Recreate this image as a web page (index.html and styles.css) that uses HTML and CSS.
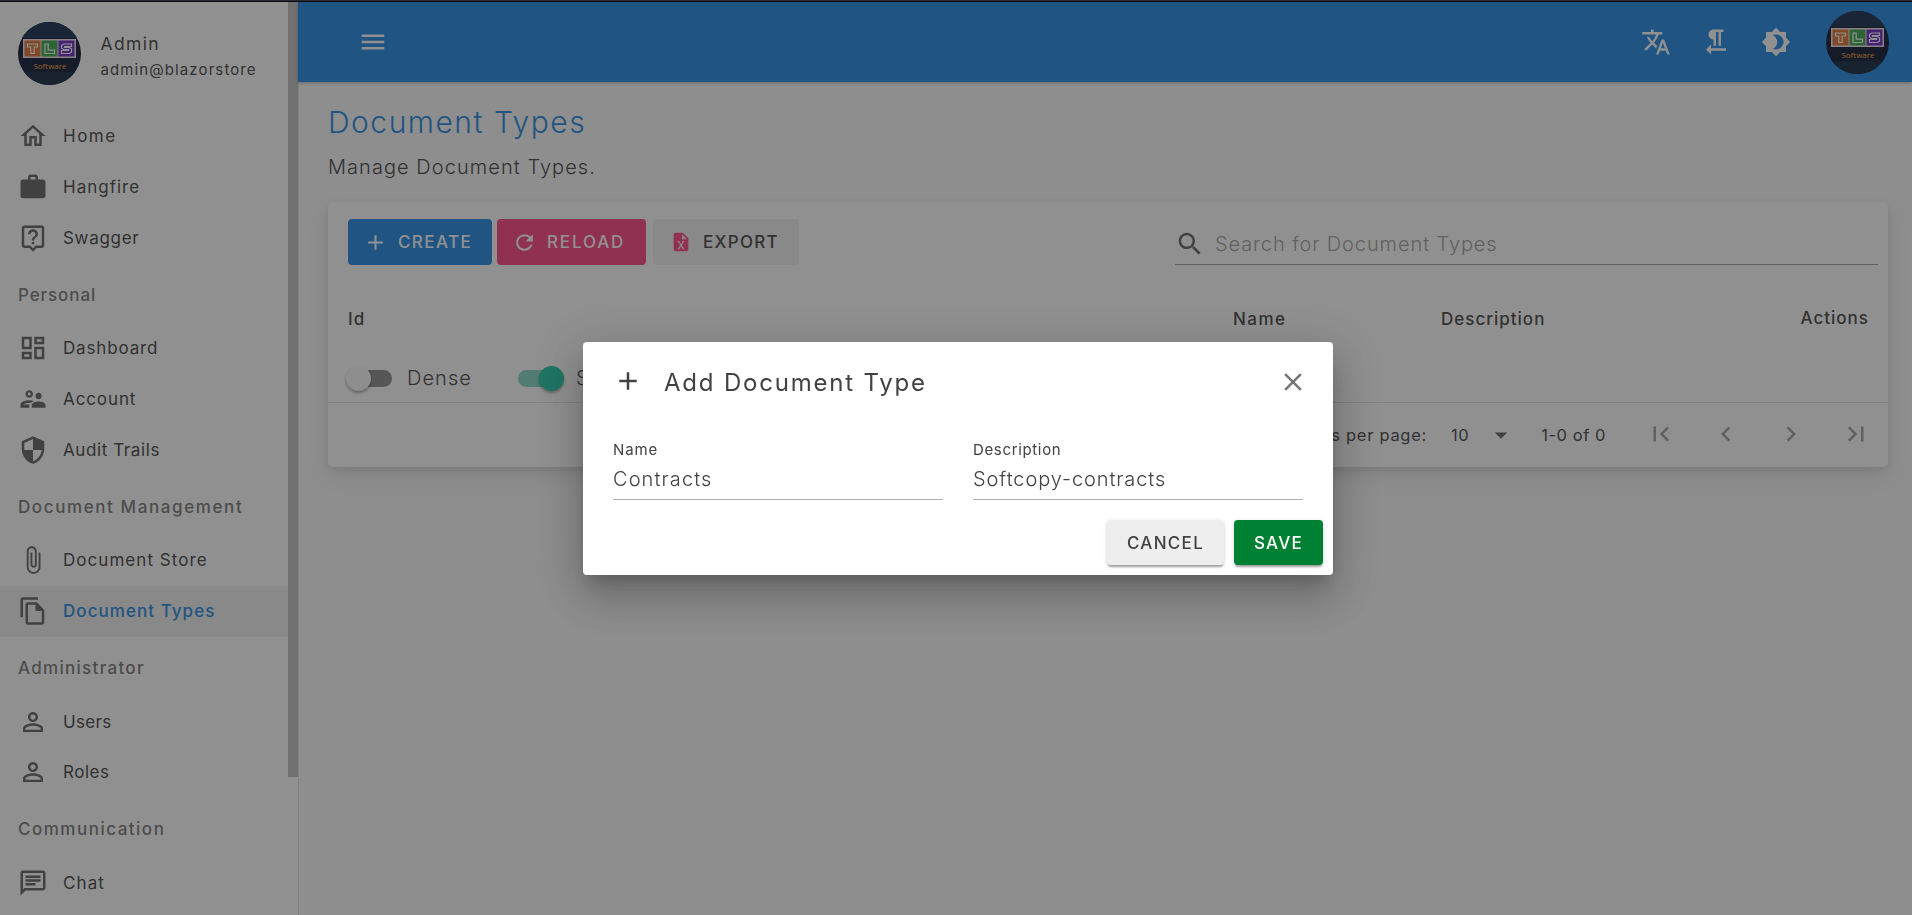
FILE: index.html
```html
<!DOCTYPE html>
<html lang="en">
<head>
<meta charset="utf-8">
<title>Document Types</title>
<link rel="stylesheet" href="styles.css">
</head>
<body>
<svg width="0" height="0" class="defs" aria-hidden="true">
  <symbol id="logo" viewBox="0 0 63 63">
    <circle cx="31.5" cy="31.5" r="31.5" fill="#0b1530"/>
    <path d="M4 16 A31.5 31.5 0 0 1 59 16Z" fill="#132a4c"/>
    <path d="M6 50 A31.5 31.5 0 0 0 57 50Z" fill="#10253f"/>
    <rect x="5" y="17" width="53" height="19" fill="#f3e3e6"/>
    <rect x="6.500" y="18.500" width="16" height="16" fill="#e0702c"/>
    <rect x="23.500" y="18.500" width="16" height="16" fill="#38a648"/>
    <rect x="40.500" y="18.500" width="16" height="16" fill="#6a22c8"/>
    <g fill="none" stroke="#fff" stroke-width="1.2">
      <path d="M9.500 22h10v3h-3.300v6.500h-3.400V25H9.500z"/>
      <path d="M27 22h3.200v6.200h6.300v3.300H27z"/>
      <path d="M53.500 22h-8l-2 1.500v2.500l2 1.500h5v1h-7v3h8l2-1.500v-3l-2-1.500h-5v-1h7z"/>
    </g>
  </symbol>
  <symbol id="person" viewBox="0 0 24 24"><path d="M12 5.900c1.160 0 2.100.94 2.100 2.100s-.94 2.100-2.100 2.100S9.900 9.160 9.900 8s.94-2.100 2.100-2.100m0 9c2.970 0 6.100 1.460 6.100 2.100v1.100H5.900V17c0-.64 3.130-2.100 6.100-2.100M12 4C9.790 4 8 5.790 8 8s1.790 4 4 4 4-1.790 4-4-1.790-4-4-4zm0 9c-2.670 0-8 1.340-8 4v3h16v-3c0-2.660-5.330-4-8-4z"/></symbol>
  <symbol id="plus" viewBox="0 0 24 24"><path d="M19 13h-6v6h-2v-6H5v-2h6V5h2v6h6v2z"/></symbol>
</svg>

<div class="app">
  <div class="window-edge"></div>
  <div class="shell">
    <aside class="drawer">
      <div class="profile">
        <svg class="avatar"><use href="#logo" width="63" height="63"/><text x="32" y="47" text-anchor="middle" class="logo-text">Software</text></svg>
        <div class="who"><span class="who-name">Admin</span><span class="who-mail">admin@blazorstore</span></div>
      </div>
      <nav class="nav">
        <a class="item"><svg viewBox="0 0 24 24"><path d="M12 5.690l5 4.500V18h-2v-6H9v6H7v-7.810l5-4.500M12 3L2 12h3v8h6v-6h2v6h6v-8h3L12 3z"/></svg><span class="t-home">Home</span></a>
        <a class="item"><svg viewBox="0 0 24 24"><path d="M10 2h4c1.100 0 2 .9 2 2v2h4c1.100 0 2 .9 2 2v11c0 1.100-.9 2-2 2H4c-1.100 0-2-.9-2-2V8c0-1.100.9-2 2-2h4V4c0-1.100.9-2 2-2zm4 4V4h-4v2h4z"/></svg><span class="t-hangfire">Hangfire</span></a>
        <a class="item"><svg viewBox="0 0 24 24"><path d="M19 2H5c-1.110 0-2 .9-2 2v14c0 1.100.89 2 2 2h4l3 3 3-3h4c1.100 0 2-.9 2-2V4c0-1.100-.9-2-2-2zm0 16h-4.830l-.59.590L12 20.170l-1.590-1.590-.58-.58H5V4h14v14zm-8-3h2v2h-2zm1-8c1.100 0 2 .9 2 2 0 2-3 1.750-3 5h2c0-2.250 3-2.500 3-5 0-2.210-1.790-4-4-4S8 6.790 8 9h2c0-1.100.9-2 2-2z"/></svg><span class="t-swagger">Swagger</span></a>
        <div class="group"><span class="t-personal">Personal</span></div>
        <a class="item"><svg viewBox="0 0 24 24"><path d="M19 5v2h-4V5h4M9 5v6H5V5h4m10 8v6h-4v-6h4M9 17v2H5v-2h4M21 3h-8v6h8V3zM11 3H3v10h8V3zm10 8h-8v10h8V11zm-10 4H3v6h8v-6z"/></svg><span class="t-dashboard">Dashboard</span></a>
        <a class="item"><svg viewBox="0 0 24 24"><path d="M16.500 12c1.380 0 2.490-1.120 2.490-2.500S17.880 7 16.500 7 14 8.120 14 9.500s1.120 2.500 2.500 2.500zM9 11c1.660 0 2.990-1.340 2.990-3S10.660 5 9 5 6 6.340 6 8s1.340 3 3 3zm0-4.200c.66 0 1.200.54 1.200 1.200S9.660 9.200 9 9.200 7.800 8.660 7.800 8 8.340 6.800 9 6.800zM16.500 14c-1.830 0-5.500.92-5.500 2.750V19h11v-2.250c0-1.830-3.670-2.750-5.500-2.750zM9 13c-2.330 0-7 1.170-7 3.500V19h7v-2.250c0-.14.010-.27.040-.4H4.600c.6-.6 2.600-1.350 4.400-1.350.5 0 1 .06 1.480.140.6-.68 1.400-1.200 2.270-1.560C11.360 13.200 9.970 13 9 13z"/></svg><span class="t-account">Account</span></a>
        <a class="item"><svg viewBox="0 0 24 24"><path d="M12 1L3 5v6c0 5.550 3.840 10.740 9 12 5.160-1.260 9-6.450 9-12V5l-9-4zm0 10.990h7c-.53 4.120-3.280 7.790-7 8.940V12H5V6.300l7-3.110v8.800z"/></svg><span class="t-audit">Audit Trails</span></a>
        <div class="group"><span class="t-docmgmt">Document Management</span></div>
        <a class="item"><svg viewBox="0 0 24 24"><path d="M16.500 6v11.500c0 2.210-1.790 4-4 4s-4-1.790-4-4V5c0-1.380 1.120-2.500 2.500-2.500s2.500 1.120 2.500 2.500v10.500c0 .55-.45 1-1 1s-1-.45-1-1V6H10v9.500c0 1.380 1.120 2.500 2.500 2.500s2.500-1.120 2.500-2.500V5c0-2.210-1.790-4-4-4S7 2.790 7 5v12.500c0 3.040 2.460 5.500 5.500 5.500s5.500-2.460 5.500-5.500V6h-1.500z"/></svg><span class="t-store">Document Store</span></a>
        <a class="item active"><svg viewBox="0 0 24 24"><path d="M16 1H4c-1.100 0-2 .9-2 2v14h2V3h12V1zm-1 4H8c-1.100 0-1.990.9-1.990 2L6 21c0 1.100.89 2 1.990 2H19c1.100 0 2-.9 2-2V11l-6-6zM8 21V7h6v5h5v9H8z"/></svg><span class="t-types">Document Types</span></a>
        <div class="group"><span class="t-administrator">Administrator</span></div>
        <a class="item"><svg><use href="#person"/></svg><span class="t-users">Users</span></a>
        <a class="item"><svg><use href="#person"/></svg><span class="t-roles">Roles</span></a>
        <div class="group"><span class="t-communication">Communication</span></div>
        <a class="item"><svg viewBox="0 0 24 24"><path d="M4 4h16v12H5.170L4 17.170V4m0-2c-1.100 0-1.990.9-1.990 2L2 22l4-4h14c1.100 0 2-.9 2-2V4c0-1.100-.9-2-2-2H4zm2 10h8v2H6v-2zm0-3h12v2H6V9zm0-3h12v2H6V6z"/></svg><span class="t-chat">Chat</span></a>
      </nav>
      <div class="scroll-thumb"></div>
    </aside>

    <div class="body">
      <header class="appbar">
        <svg class="ic menu" viewBox="0 0 24 24"><path d="M3 18h18v-2H3v2zm0-5h18v-2H3v2zm0-7v2h18V6H3z"/></svg>
        <div class="appbar-end">
          <svg class="ic" viewBox="0 0 24 24"><path d="M12.870 15.070l-2.540-2.510.03-.03c1.740-1.940 2.980-4.170 3.710-6.530H17V4h-7V2H8v2H1v1.990h11.170C11.500 7.920 10.440 9.750 9 11.350 8.070 10.320 7.300 9.190 6.690 8h-2c.73 1.630 1.730 3.170 2.980 4.560l-5.090 5.020L4 19l5-5 3.110 3.110.76-2.040zM18.500 10h-2L12 22h2l1.120-3h4.750L21 22h2l-4.500-12zm-2.620 7l1.620-4.330L19.120 17h-3.240z"/></svg>
          <svg class="ic" viewBox="0 0 24 24"><path d="M10 10v5h2V4h2v11h2V4h2V2h-8C7.790 2 6 3.790 6 6s1.790 4 4 4zm-2 7v-3l-4 4 4 4v-3h12v-2H8z"/></svg>
          <svg class="ic" viewBox="0 0 24 24"><path d="M20 8.690V4h-4.690L12 .69 8.690 4H4v4.690L.69 12 4 15.310V20h4.690L12 23.310 15.310 20H20v-4.690L23.310 12 20 8.690zM12 18c-.89 0-1.740-.2-2.500-.55C11.560 16.500 13 14.420 13 12s-1.440-4.500-3.500-5.450C10.260 6.200 11.110 6 12 6c3.310 0 6 2.690 6 6s-2.690 6-6 6z"/></svg>
          <svg class="avatar bar-avatar"><use href="#logo" width="63" height="63"/><text x="32" y="47" text-anchor="middle" class="logo-text">Software</text></svg>
        </div>
      </header>

      <main class="content">
        <h1><span class="t-title">Document Types</span></h1>
        <p class="sub"><span class="t-sub">Manage Document Types.</span></p>
        <section class="card">
          <div class="toolbar">
            <div class="btn primary"><svg class="wide"><use href="#plus"/></svg><span class="t-create">CREATE</span></div>
            <div class="btn secondary"><svg class="wide" viewBox="0 0 24 24"><path d="M17.650 6.350C16.200 4.900 14.210 4 12 4c-4.420 0-7.990 3.580-7.990 8s3.570 8 7.990 8c3.730 0 6.840-2.550 7.730-6h-2.080c-.82 2.330-3.040 4-5.650 4-3.310 0-6-2.690-6-6s2.690-6 6-6c1.660 0 3.140.69 4.220 1.780L13 11h7V4l-2.350 2.350z"/></svg><span class="t-reload">RELOAD</span></div>
            <div class="btn plain"><svg class="pink" viewBox="0 0 24 24"><path d="M14 2H6c-1.100 0-2 .9-2 2v16c0 1.100.9 2 2 2h12c1.100 0 2-.9 2-2V8l-6-6zm1.800 18H14l-2-3.400-2 3.400H8.200l2.900-4.500L8.200 11H10l2 3.400 2-3.400h1.800l-2.900 4.500 2.900 4.500zM13 9V3.500L18.500 9H13z"/></svg><span class="t-export">EXPORT</span></div>
            <div class="search"><svg viewBox="0 0 24 24"><path d="M15.500 14h-.79l-.28-.27C15.410 12.590 16 11.110 16 9.500 16 5.910 13.090 3 9.500 3S3 5.910 3 9.500 5.910 16 9.500 16c1.610 0 3.090-.59 4.230-1.570l.27.280v.79l5 4.990L20.490 19l-4.990-5zm-6 0C7.010 14 5 11.990 5 9.500S7.010 5 9.500 5 14 7.010 14 9.500 11.990 14 9.500 14z"/></svg><span class="t-search">Search for Document Types</span></div>
          </div>
          <div class="thead"><span class="c-id">Id</span><span class="c-name"><span class="t-colname">Name</span></span><span class="c-desc"><span class="t-coldesc">Description</span></span><span class="c-act">Actions</span></div>
          <div class="switches">
            <span class="switch off"><i></i></span><span class="sw-label first">Dense</span>
            <span class="switch on"><i></i></span><span class="sw-label">Striped</span>
          </div>
          <div class="pager">
            <span class="rows">Rows per page:</span><span class="count">10</span>
            <svg class="caret" viewBox="0 0 24 24"><path d="M7 10l5 5 5-5z"/></svg>
            <span class="range">1-0 of 0</span>
            <div class="page-icons">
              <svg viewBox="0 0 24 24"><path d="M18.410 16.590L13.820 12l4.590-4.590L17 6l-6 6 6 6zM6 6h2v12H6z"/></svg>
              <svg viewBox="0 0 24 24"><path d="M15.410 7.410L14 6l-6 6 6 6 1.410-1.410L10.830 12z"/></svg>
              <svg viewBox="0 0 24 24"><path d="M10 6L8.590 7.410 13.170 12l-4.580 4.590L10 18l6-6z"/></svg>
              <svg viewBox="0 0 24 24"><path d="M5.590 7.410L10.180 12l-4.590 4.590L7 18l6-6-6-6zM16 6h2v12h-2z"/></svg>
            </div>
          </div>
        </section>
      </main>
    </div>
  </div>
</div>

<div class="overlay">
  <div class="dialog">
    <div class="dialog-head">
      <svg class="add"><use href="#plus"/></svg><span class="t-dialog">Add Document Type</span>
      <svg class="close" viewBox="0 0 24 24"><path d="M19 6.410L17.590 5 12 10.590 6.410 5 5 6.410 10.590 12 5 17.590 6.410 19 12 13.410 17.590 19 19 17.590 13.410 12z"/></svg>
    </div>
    <div class="fields">
      <div class="field"><label><span class="t-lname">Name</span></label><div class="value"><span class="t-contracts">Contracts</span></div></div>
      <div class="field"><label><span class="t-ldesc">Description</span></label><div class="value"><span class="t-softcopy">Softcopy-contracts</span></div></div>
    </div>
    <div class="actions"><div class="dbtn cancel"><span class="t-cancel">CANCEL</span></div><div class="dbtn save"><span class="t-save">SAVE</span></div></div>
  </div>
</div>
</body>
</html>
```
FILE: styles.css
```css
* { box-sizing: border-box; }
body { margin: 0; width: 1912px; height: 915px; overflow: hidden; font-family: Inter, "Open Sans", sans-serif; color: #424242; background: #fafafa; }
.defs { position: absolute; }
.avatar { overflow: visible; }
.logo-text { font: 8px "Open Sans", sans-serif; fill: #f5a030; }
span { white-space: nowrap; }
svg { fill: currentColor; flex: none; }
h1, p { margin: 0; font-weight: 400; }

.app { display: flex; flex-direction: column; height: 915px; }
.window-edge { position: relative; z-index: 5; height: 2px; background: linear-gradient(#2a2a30 50%, #0c0c10 50%); flex: none; }
.shell { display: flex; flex: 1; min-height: 0; }

.drawer { position: relative; width: 299px; background: #fff; border-right: 1px solid #e0e0e0; flex: none; overflow: hidden; }
.scroll-thumb { position: absolute; top: 0; right: 0; width: 10px; height: 775px; background: #c1c1c1; }
.profile { display: flex; height: 109px; padding: 20px 0 0 18px; }
.avatar { width: 63px; height: 63px; }
.who { display: flex; flex-direction: column; padding: 10px 0 0 19.5px; }
.who-name { font-size: 17.5px; line-height: 24px; letter-spacing: 1.35px; }
.who-mail { font-size: 15px; line-height: 27px; letter-spacing: 1.1px; }
.item { display: flex; align-items: center; height: 50.8px; padding-left: 18px; font-size: 17px; }
.item svg { width: 30px; height: 30px; margin-right: 15px; color: #616161; }
.item.active { background: #f0f0f0; color: #1e88e5; font-weight: 500; }
.group { display: flex; align-items: center; height: 59.6px; padding: 3px 0 0 18px; font-size: 17px; font-weight: 500; color: #777; }
.t-home { letter-spacing: 1.5px; }
.t-hangfire { letter-spacing: 1px; }
.t-swagger { letter-spacing: .7px; }
.t-personal { letter-spacing: .9px; }
.t-dashboard { letter-spacing: .85px; }
.t-account { letter-spacing: .9px; }
.t-audit { letter-spacing: .6px; }
.t-docmgmt { letter-spacing: 1.6px; }
.t-store { letter-spacing: 1.05px; }
.t-types { letter-spacing: 1.05px; }
.t-administrator { letter-spacing: 1.3px; }
.t-users { letter-spacing: .3px; }
.t-roles { letter-spacing: .5px; }
.t-communication { letter-spacing: 1.5px; }
.t-chat { letter-spacing: 1.1px; }

.body { flex: 1; min-width: 0; display: flex; flex-direction: column; }
.appbar { height: 80px; flex: none; display: flex; align-items: center; justify-content: space-between; padding: 0 22px 0 60px; background: #1e88e5; color: #fff; box-shadow: 0 1px 3px rgba(0,0,0,.3); margin-left: -1px; position: relative; }
.ic { width: 30px; height: 30px; }
.appbar-end { display: flex; align-items: center; gap: 30px; }
.bar-avatar { margin-left: 5px; margin-right: 1px; }

.content { padding: 20px 24px 0 29px; }
h1 { height: 43px; line-height: 41px; font-size: 30px; font-weight: 300; color: #1e88e5; letter-spacing: 1.5px; }
.sub { height: 57px; line-height: 44px; font-size: 20px; font-weight: 300; letter-spacing: 1.05px; }
.card { height: 265px; background: #fff; border-radius: 5px; box-shadow: 0 3px 10px rgba(0,0,0,.1), 0 10px 22px rgba(0,0,0,.08); }
.toolbar { display: flex; height: 80px; padding: 17px 10px 0 20px; }
.btn { display: flex; align-items: center; height: 46px; border-radius: 4px; font-size: 17px; font-weight: 500; padding-left: 17px; }
.btn svg { width: 22px; height: 22px; margin-right: 11px; }
.btn .wide { width: 25px; height: 25px; margin: 0 10px 0 -2px; }
.primary { width: 144px; background: #1e88e5; color: #fff; margin-right: 5px; letter-spacing: 1.4px; }
.secondary { width: 149px; background: #ff4081; color: #fff; margin-right: 7px; letter-spacing: 1.85px; }
.plain { width: 146px; background: #f0f0f0; letter-spacing: 1.3px; }
.pink { color: #ff4081; }
.search { width: 703px; height: 46px; margin-left: auto; border-bottom: 1px solid #9a9a9a; display: flex; align-items: center; font-size: 20px; font-weight: 300; letter-spacing: .9px; color: #a0a0a0; padding-top: 4px; }
.search svg { width: 30px; height: 30px; color: #616161; margin-right: 10px; }
.thead { display: flex; height: 72px; align-items: center; padding: 1px 20px 0; font-size: 17px; font-weight: 500; letter-spacing: 1px; }
.c-id { width: 885px; }
.c-name { width: 208px; letter-spacing: 1.5px; }
.c-desc { flex: 1; }
.c-act { padding-bottom: 2px; margin-right: -1px; }
.switches { display: flex; height: 49px; align-items: center; padding-left: 18px; font-size: 20px; font-weight: 300; letter-spacing: 1.05px; border-bottom: 1px solid #e0e0e0; }
.switch { position: relative; width: 46px; height: 25px; flex: none; padding: 4px 0; }
.switch::before { content: ""; display: block; height: 17px; border-radius: 9px; }
.off::before { background: #8a8a8a; margin-left: 10px; }
.on::before { background: #80d6c2; margin-right: 10px; }
.switch i { position: absolute; top: 0; width: 25px; height: 25px; border-radius: 50%; background: #fafafa; box-shadow: 0 2px 3px rgba(0,0,0,.35); }
.off i { left: 0; }
.on i { right: 0; background: #1ec8a5; }
.sw-label { margin-left: 12px; }
.first { width: 64px; margin-left: 15px; margin-right: 47px; }
.pager { display: flex; height: 64px; align-items: center; justify-content: flex-end; font-size: 16.5px; letter-spacing: .55px; padding-right: 17px; }
.rows { letter-spacing: .7px; }
.count { margin-left: 24px; }
.caret { width: 30px; height: 30px; margin: 0 25px 0 17px; color: #616161; }
.page-icons { display: flex; gap: 35px; margin-left: 40px; color: #a0a0a0; padding-bottom: 3px; }
.page-icons svg { width: 30px; height: 30px; }

.overlay { position: fixed; inset: 0; background: rgba(33,33,33,.5); padding: 342px 0 0 583px; }
.dialog { width: 750px; height: 233px; background: #fff; border-radius: 4px; box-shadow: 0 11px 15px -7px rgba(0,0,0,.2), 0 24px 38px 3px rgba(0,0,0,.14), 0 9px 46px 8px rgba(0,0,0,.12); }
.dialog-head { display: flex; align-items: center; height: 80px; padding: 0 25px 0 30px; font-size: 24px; letter-spacing: 1.8px; }
.add { width: 30px; height: 30px; margin: 0 21px 2px 0; }
.close { width: 30px; height: 30px; margin-left: auto; color: #757575; }
.fields { display: flex; gap: 30px; padding: 18px 30px 0; height: 98px; }
.field { width: 330px; height: 60px; border-bottom: 1px solid #b0b0b0; }
label { display: block; font-size: 15px; line-height: 20px; }
.t-lname { letter-spacing: .9px; }
.t-ldesc { letter-spacing: .65px; }
.value { font-size: 20px; font-weight: 300; line-height: 38px; }
.t-contracts { letter-spacing: 1.1px; }
.t-softcopy { letter-spacing: .9px; }
.actions { display: flex; justify-content: flex-end; gap: 10px; padding-right: 10px; }
.dbtn { display: flex; align-items: center; justify-content: center; height: 45px; border-radius: 4px; font-size: 17px; font-weight: 500; letter-spacing: 1.3px; box-shadow: 0 3px 2px -1px rgba(0,0,0,.3), 0 1px 4px rgba(0,0,0,.15); }
.cancel { width: 117px; background: #eee; }
.save { width: 89px; background: #008033; color: #fff; }
```
